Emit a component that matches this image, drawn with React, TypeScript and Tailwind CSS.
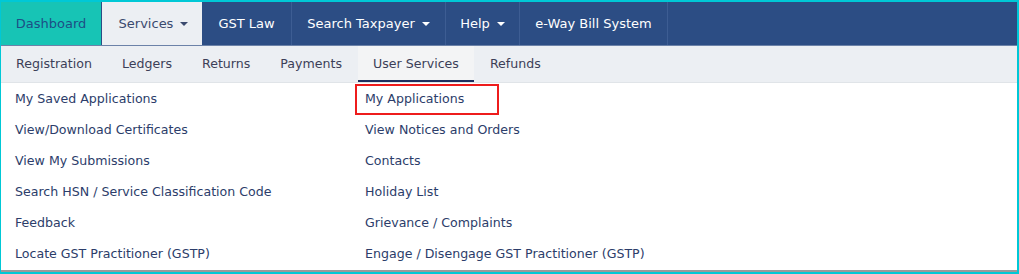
import React from "react";

const topNav = [
  { label: "Dashboard", w: "w-[101px]", kind: "dash" },
  { label: "Services", w: "w-[100px]", kind: "open", caret: true },
  { label: "GST Law", w: "w-[90px]" },
  { label: "Search Taxpayer", w: "w-[154px]", caret: true },
  { label: "Help", w: "w-[74px]", caret: true },
  { label: "e-Way Bill System", w: "w-[148px]" },
];

const subNav = ["Registration", "Ledgers", "Returns", "Payments", "User Services", "Refunds"];

const leftLinks = [
  "My Saved Applications",
  "View/Download Certificates",
  "View My Submissions",
  "Search HSN / Service Classification Code",
  "Feedback",
  "Locate GST Practitioner (GSTP)",
];

const rightLinks = [
  "My Applications",
  "View Notices and Orders",
  "Contacts",
  "Holiday List",
  "Grievance / Complaints",
  "Engage / Disengage GST Practitioner (GSTP)",
];

function Caret() {
  return <span className="ml-[7px] inline-block border-x-[4px] border-t-[4px] border-x-transparent border-t-current align-middle" />;
}

export default function App() {
  return (
    <div
      className="w-[1019px] h-[274px] bg-[#00c8d6] pt-[2px] pl-[1px] pr-[2px] pb-[2px] text-[12.6px]"
      style={{ fontFamily: '"DejaVu Sans", Verdana, sans-serif' }}
    >
      <div className="h-full flex flex-col bg-white border-b-2 border-[#9a9a9a]">
        <nav className="h-[44px] shrink-0 flex bg-[#2c4d84] border-b border-[#6c82a8] text-[13px]">
          {topNav.map((t) => (
            <div
              key={t.label}
              className={
                t.w +
                " flex items-center justify-center border-r " +
                (t.kind === "dash"
                  ? "bg-[#17c4b5] text-[#1d4f86] border-[#2c4d84]"
                  : t.kind === "open"
                  ? "bg-[#eceff3] text-[#3a4a6e] border-[#eceff3] pl-[4px]"
                  : "text-white border-[#3d5d93]")
              }
            >
              {t.label}
              {t.caret && <Caret />}
            </div>
          ))}
          <div className="flex-1" />
        </nav>
        <div className="h-[37px] shrink-0 flex bg-[#eceff3] border-b border-[#e0e4e8]">
          {subNav.map((s) => (
            <div
              key={s}
              className={
                "px-[15px] flex items-center text-[#3c3f58] " +
                (s === "User Services" ? "bg-[#f3f4f5] border-b-2 border-[#1e2f5e] pt-[2px] px-[14px] mx-[1px]" : "")
              }
            >
              {s}
            </div>
          ))}
        </div>
        <div className="flex-1 grid grid-cols-[349px_1fr] pt-[1px] text-[#2c3d6a]">
          <ul className="pl-[14px]">
            {leftLinks.map((l) => (
              <li key={l} className="h-[31px] flex items-center">
                {l}
              </li>
            ))}
          </ul>
          <ul className="pl-[5px]">
            {rightLinks.map((l, i) => (
              <li key={l} className="h-[31px] flex items-center">
                {i === 0 ? (
                  <span className="border-2 border-[#ee1c1c] pl-[8px] pr-[33px] py-[4px]">{l}</span>
                ) : (
                  <span className="pl-[10px]">{l}</span>
                )}
              </li>
            ))}
          </ul>
        </div>
      </div>
    </div>
  );
}
